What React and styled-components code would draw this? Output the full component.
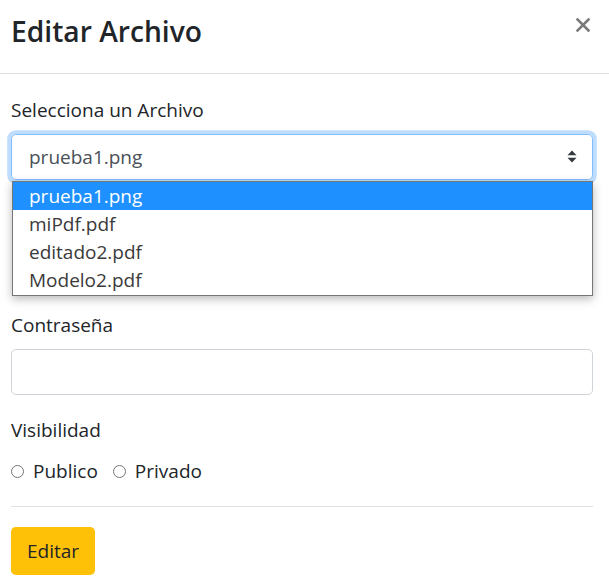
import React from "react";
import styled, { createGlobalStyle } from "styled-components";

const Global = createGlobalStyle`
  html, body { margin: 0; padding: 0; background: #fff; }
  body { font-family: "Open Sans", "Noto Sans", sans-serif; color: #212529; }
  * { box-sizing: border-box; }
`;

const Modal = styled.div`
  width: 609px;
  height: 583px;
  overflow: hidden;
  background: #fff;
`;

const Header = styled.div`
  display: flex;
  justify-content: space-between;
  align-items: flex-start;
  height: 74px;
  padding: 9.5px 19px 0 11px;
  border-bottom: 1px solid #dee2e6;
`;

const Title = styled.h4`
  margin: 0;
  font-size: 28.2px;
  font-weight: 600;
  line-height: 1.5;
  color: #212529;
`;

const Close = styled.button`
  display: flex;
  border: 0;
  background: none;
  padding: 0;
  margin-top: 8.5px;
  color: #7a7a7a;
  cursor: pointer;
`;

const Body = styled.div`
  padding: 21.6px 16px 0 11px;
`;

const Group = styled.div`
  margin-bottom: ${(p) => p.$mb || "19.2px"};
  visibility: ${(p) => (p.$hidden ? "hidden" : "visible")};
`;

const Label = styled.label`
  display: block;
  font-size: 19px;
  line-height: 28.8px;
  margin-bottom: 9.6px;
  color: #212529;
`;

const SelectWrap = styled.div`
  position: relative;
`;

const SelectBox = styled.div`
  display: flex;
  align-items: center;
  justify-content: space-between;
  height: 46px;
  padding: 0 15px 0 17px;
  border: 1px solid #80bdff;
  border-radius: 4.8px;
  box-shadow: 0 0 0 3.8px rgba(0, 123, 255, 0.25);
  font-size: 19px;
  color: #495057;
`;

const Menu = styled.ul`
  position: absolute;
  top: 47px;
  left: 1px;
  right: 0;
  margin: 0;
  padding: 0 0 1px;
  list-style: none;
  background: #fff;
  border: 1px solid #767676;
  box-shadow: 0 3px 9px rgba(0, 0, 0, 0.28);
  z-index: 5;
`;

const Option = styled.li`
  height: 28px;
  line-height: 28px;
  padding-left: 16px;
  font-size: 19px;
  background: ${(p) => (p.$active ? "#1e90ff" : "#fff")};
  color: ${(p) => (p.$active ? "#fff" : "#3a3a3a")};
`;

const Input = styled.div`
  height: 46px;
  border: 1px solid #ced4da;
  border-radius: 4.8px;
  background: #fff;
`;

const RadioRow = styled.div`
  display: flex;
  align-items: center;
  gap: 15px;
  height: 28.8px;
  margin-top: 11.6px;
`;

const RadioLabel = styled.label`
  display: flex;
  align-items: center;
  gap: 9px;
  font-size: 19px;
  color: #212529;
`;

const RadioDot = styled.span`
  flex: none;
  width: 13px;
  height: 13px;
  border: 1px solid #767676;
  border-radius: 50%;
  background: #fff;
`;

const Divider = styled.hr`
  margin: 20px 0 20px;
  border: 0;
  border-top: 1px solid #dee2e6;
`;

const Button = styled.button`
  height: 48px;
  padding: 0 16px;
  border: 0;
  border-radius: 4.8px;
  background: #ffc107;
  color: #212529;
  font-family: inherit;
  font-size: 19px;
  cursor: pointer;
`;

const files = ["prueba1.png", "miPdf.pdf", "editado2.pdf", "Modelo2.pdf"];

export default function App() {
  return (
    <Modal>
      <Global />
      <Header>
        <Title>Editar Archivo</Title>
        <Close aria-label="Cerrar">
          <svg width="14" height="14" viewBox="0 0 14 14">
            <path d="M1.5 1.5 L12.5 12.5 M12.5 1.5 L1.5 12.5" stroke="currentColor" strokeWidth="2.6" strokeLinecap="square" />
          </svg>
        </Close>
      </Header>
      <Body>
        <Group>
          <Label>Selecciona un Archivo</Label>
          <SelectWrap>
            <SelectBox>
              <span>prueba1.png</span>
              <svg width="10" height="13" viewBox="0 0 10 13">
                <path d="M5 0.5 L9.5 5.3 H0.5 Z M5 12.5 L9.5 7.7 H0.5 Z" fill="#343a40" />
              </svg>
            </SelectBox>
            <Menu>
              {files.map((f, i) => (
                <Option key={f} $active={i === 0}>{f}</Option>
              ))}
            </Menu>
          </SelectWrap>
        </Group>
        <Group $hidden $mb="27.4px">
          <Label>Nombre</Label>
          <Input />
        </Group>
        <Group $mb="21px">
          <Label>Contraseña</Label>
          <Input />
        </Group>
        <Group $mb="0">
          <Label>Visibilidad</Label>
          <RadioRow>
            <RadioLabel><RadioDot />Publico</RadioLabel>
            <RadioLabel><RadioDot />Privado</RadioLabel>
          </RadioRow>
        </Group>
        <Divider />
        <Button>Editar</Button>
      </Body>
    </Modal>
  );
}
